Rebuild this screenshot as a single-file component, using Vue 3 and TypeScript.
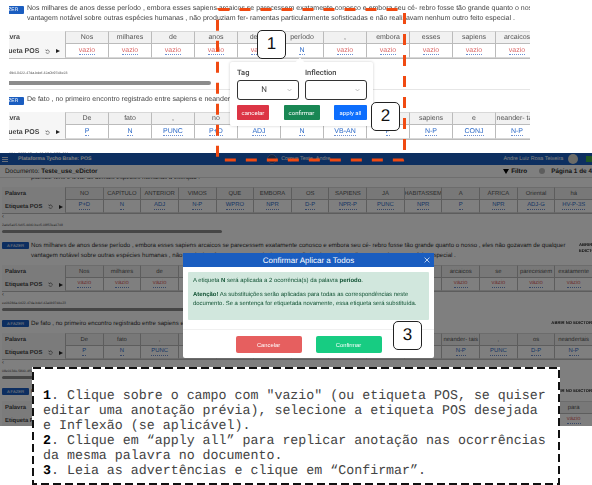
<script setup lang="ts">
interface Sentence {
  lines: string[]
  words: string[]
  tags: string[]
  uuid: string
  link?: 'wrap' | 'line'
}

const empty = (n: number) => Array.from({ length: n }, () => 'vazio')

const topRows: Sentence[] = [
  {
    lines: [
      'Nos milhares de anos desse período , embora esses sapiens arcaicos se parecessem exatamente conosco e embora seu cé- rebro fosse tão grande quanto o nosso , eles',
      'vantagem notável sobre outras espécies humanas , não produziam fer- ramentas particularmente sofisticadas e não realizavam nenhum outro feito especial .',
    ],
    words: ['Nos', 'milhares', 'de', 'anos', 'desse', 'período', ',', 'embora', 'esses', 'sapiens', 'arcaicos', 'se'],
    tags: ['vazio', 'vazio', 'vazio', 'vazio', 'vazio', 'N', 'vazio', 'vazio', 'vazio', 'vazio', 'vazio', 'vazio'],
    uuid: '5fa2c9b4-0422-47da-bdef-42a0b97d4e23',
  },
  {
    lines: ['De fato , no primeiro encontro registrado entre sapiens e neander- tais , os neandertais'],
    words: ['De', 'fato', ',', 'no', 'primeiro', 'encontro', 'registrado', 'entre', 'sapiens', 'e', 'neander- tais', ','],
    tags: ['P', 'N', 'PUNC', 'P+D', 'ADJ', 'N', 'VB-AN', 'P', 'N-P', 'CONJ', 'N-P', 'PUNC'],
    uuid: '08e013de-5800-4f5a-8a89-9f12c6f05e981',
  },
]

const lowerRows: Sentence[] = [
  {
    lines: [
      'Nos milhares de anos desse período , embora esses sapiens arcaicos se parecessem exatamente conosco e embora seu cé- rebro fosse tão grande quanto o nosso , eles não gozavam de qualquer',
      'vantagem notável sobre outras espécies humanas , não produziam fer- ramentas particularmente sofisticadas e não realizavam nenhum outro feito especial .',
    ],
    words: ['Nos', 'milhares', 'de', 'anos', 'desse', 'período', ',', 'embora', 'esses', 'sapiens', 'arcaicos', 'se', 'parecessem', 'exatamente'],
    tags: empty(14),
    uuid: 'ee0b28da-0422-47da-bdef-42a0b97d4e23',
    link: 'wrap',
  },
  {
    lines: ['De fato , no primeiro encontro registrado entre sapiens e neander- tais , os neandertais'],
    words: ['De', 'fato', ',', 'no', 'primeiro', 'encontro', 'registrado', 'entre', 'sapiens', 'e', 'neander- tais', ',', 'os', 'neandertais'],
    tags: ['P', 'N', 'PUNC', 'P+D', 'ADJ', 'N', 'VB-AN', 'P', 'N-P', 'CONJ', 'N-P', 'PUNC', 'D-P', 'N-P'],
    uuid: '08e013de-5800-4f5a-8a89-9f12c6f05e981',
    link: 'line',
  },
  {
    lines: ['Os sapiens expandiram-se'],
    words: ['Os', 'sapiens', 'se', 'expandiram', 'pelo', 'mundo', 'e', 'chegaram', 'da', 'África', 'até', 'a', 'Ásia', 'para'],
    tags: empty(14),
    uuid: '',
    link: 'line',
  },
]

const firstWords = ['NO', 'CAPÍTULO', 'ANTERIOR', 'VIMOS', 'QUE', 'EMBORA', 'OS', 'SAPIENS', 'JÁ', 'HABITASSEM', 'A', 'ÁFRICA', 'Oriental', 'há']
const firstTags = ['P+D', 'N', 'ADJ', 'N-P', 'WPRO', 'NPR', 'D-P', 'NPR-P', 'PUNC', 'NPR', 'P', 'NPR', 'ADJ-G', 'HV-P-3S']
</script>

<template>
  <div class="page">
    <!-- recorte de cima: edição de uma etiqueta -->
    <div class="top">
      <section v-for="(s, i) in topRows" :key="i" class="t-block">
        <div class="t-head">
          <span class="badge">A FAZER</span>
          <div>
            <div v-for="l in s.lines" :key="l" class="line">{{ l }}</div>
          </div>
        </div>
        <div class="grid t-grid">
          <div class="cell label">Palavra</div>
          <div v-for="(w, j) in s.words" :key="j" class="cell word">{{ w }}</div>
          <div class="cell label">
            Etiqueta POS
            <svg class="undo" viewBox="0 0 10 10"><path d="M2.5 3.2A3.4 3.4 0 1 1 1.8 6M1.2 1.2 2.4 3.5 4.8 3" fill="none" stroke="#333" stroke-width="1" /></svg>
            <span class="play"></span>
          </div>
          <div v-for="(t, j) in s.tags" :key="j" class="cell">
            <span :class="t === 'vazio' ? 'empty' : 'tag'">{{ t }}</span>
          </div>
        </div>
        <div class="t-uuid">{{ s.uuid }}</div>
        <div v-if="i === 0" class="t-bar"></div>
      </section>
    </div>

    <!-- recorte de baixo: modal de confirmação -->
    <div class="lower">
      <header class="nav">
        <svg class="burger" viewBox="0 0 6 5"><path d="M0 .5h6M0 2.5h6M0 4.5h6" stroke="#fff" stroke-width=".8" /></svg>
        <span class="brand">Plataforma Tycho Brahe: POS</span>
        <span class="corpus"><i class="globe"></i>Corpus Teste_Andre</span>
        <span class="user">Andre Luiz Rosa Teixeira</span>
        <i class="avatar"></i>
        <i class="flag"></i>
      </header>
      <div class="doc">
        <span class="doc-name">Documento: <b>Teste_use_eDictor</b></span>
        <span class="filter"><i class="funnel"></i>Filtro</span>
        <i class="dot"></i>
        <b class="pager">Página 1 de 4</b>
      </div>
      <div class="cut"><div>planície fértil e levar as demais espécies humanas à extinção .</div></div>

      <div class="grid l-grid">
        <div class="cell label">Palavra</div>
        <div v-for="w in firstWords" :key="w" class="cell word">{{ w }}</div>
        <div class="cell label">
          Etiqueta POS
          <svg class="undo" viewBox="0 0 10 10"><path d="M2.5 3.2A3.4 3.4 0 1 1 1.8 6M1.2 1.2 2.4 3.5 4.8 3" fill="none" stroke="#333" stroke-width="1" /></svg>
          <span class="play"></span>
        </div>
        <div v-for="(t, j) in firstTags" :key="j" class="cell"><span class="tag">{{ t }}</span></div>
      </div>
      <div class="meta">
        <div class="arrow">‹</div>
        <div class="uuid">2a4e5a15-fe65-4d40-bec5-08f53ea1748</div>
        <div class="bar"></div>
      </div>

      <section v-for="(s, i) in lowerRows" :key="i" class="l-block">
        <div class="l-head">
          <span class="badge l-badge">A FAZER</span>
          <div>
            <div v-for="l in s.lines" :key="l" class="l-line">{{ l }}</div>
          </div>
          <span class="open" :class="s.link">ABRIR NO EDICTOR</span>
        </div>
        <div class="grid l-grid">
          <div class="cell label">Palavra</div>
          <div v-for="(w, j) in s.words" :key="j" class="cell word">{{ w }}</div>
          <div class="cell label">
            Etiqueta POS
            <svg class="undo" viewBox="0 0 10 10"><path d="M2.5 3.2A3.4 3.4 0 1 1 1.8 6M1.2 1.2 2.4 3.5 4.8 3" fill="none" stroke="#333" stroke-width="1" /></svg>
            <span class="play"></span>
          </div>
          <div v-for="(t, j) in s.tags" :key="j" class="cell">
            <span :class="t === 'vazio' ? 'empty' : 'tag'">{{ t }}</span>
          </div>
        </div>
        <div class="meta">
          <div class="arrow">‹</div>
          <div class="uuid">{{ s.uuid }}</div>
          <div class="bar"></div>
        </div>
      </section>

      <div class="backdrop"></div>
      <div class="modal">
        <div class="m-head">
          <span>Confirmar Aplicar a Todos</span>
          <svg class="close" viewBox="0 0 10 10"><path d="M1 1l8 8M9 1l-8 8" stroke="#fff" stroke-width="1.2" /></svg>
        </div>
        <div class="m-body">
          <div class="alert">
            <p>A etiqueta <b>N</b> será aplicada a 2 ocorrência(s) da palavra <b>período</b>.</p>
            <p><b>Atenção!</b> As substituições serão aplicadas para todas as correspondências neste documento. Se a sentença for etiquetada novamente, essa etiqueta será substituída.</p>
          </div>
        </div>
        <div class="m-foot">
          <button class="m-btn cancel">Cancelar</button>
          <button class="m-btn ok">Confirmar</button>
        </div>
      </div>
    </div>

    <div class="popover">
      <i class="pop-arrow"></i>
      <div class="pop-fields">
        <label>Tag
          <span class="select">N<svg viewBox="0 0 8 5"><path d="M1 1l3 3 3-3" fill="none" stroke="#999" stroke-width="1" /></svg></span>
        </label>
        <label>Inflection
          <span class="select"><svg viewBox="0 0 8 5"><path d="M1 1l3 3 3-3" fill="none" stroke="#999" stroke-width="1" /></svg></span>
        </label>
      </div>
      <div class="pop-actions">
        <button class="p-btn red">cancelar</button>
        <button class="p-btn green">confirmar</button>
        <button class="p-btn blue">apply all</button>
      </div>
    </div>

    <svg class="marks" width="592" height="170">
      <rect x="217.5" y="9.5" width="187" height="150.5" rx="1" fill="none" stroke="#f04a12" stroke-width="3" stroke-dasharray="11 10" />
    </svg>

    <div class="step one">1</div>
    <div class="step two">2</div>
    <div class="step three">3</div>

    <div class="help">
      <svg class="help-line" width="528" height="118">
        <rect x="1" y="1" width="526" height="116" fill="none" stroke="#111" stroke-width="2" stroke-dasharray="8 4" />
      </svg>
      <p><b>1</b>. Clique sobre o campo com "vazio" (ou etiqueta POS, se quiser editar uma anotação prévia), selecione a etiqueta POS desejada e Inflexão (se aplicável).</p>
      <p><b>2</b>. Clique em “apply all” para replicar anotação nas ocorrências da mesma palavra no documento.</p>
      <p><b>3</b>. Leia as advertências e clique em “Confirmar”.</p>
    </div>
  </div>
</template>

<style scoped>
.page {
  position: relative;
  width: 592px;
  height: 485px;
  overflow: hidden;
  background: #fff;
  font-family: "Liberation Sans", Arial, sans-serif;
  color: #333;
  text-rendering: geometricPrecision;
}

/* recorte de cima */
.top {
  width: 521px;
  height: 153px;
  margin-left: 9px;
  overflow: hidden;
  filter: blur(.3px);
}

.t-block {
  padding-top: 4px;
}

.t-block:first-child {
  height: 85px;
  border-bottom: 1px solid #e6e6e6;
  box-sizing: content-box;
}

.t-block + .t-block {
  padding-top: 5px;
}

.t-head {
  display: flex;
  gap: 3px;
  margin-left: -17px;
  margin-bottom: 7px;
}

.badge {
  flex: none;
  width: 32px;
  height: 8px;
  margin-top: 2px;
  background: #1a5dc0;
  color: #fff;
  font-size: 5px;
  line-height: 8px;
  text-align: center;
  border-radius: 1px;
}

.line {
  font-size: 7px;
  line-height: 10px;
  white-space: nowrap;
  color: #444;
}

.grid {
  display: grid;
  text-align: center;
}

.t-grid {
  margin-left: -19px;
  grid-template-columns: 75px repeat(12, 43px);
  grid-template-rows: 13px 14px;
  font-size: 7px;
  border-bottom: 1px solid #bbb;
}

.cell {
  display: flex;
  align-items: center;
  justify-content: center;
  border-left: 1px solid #bbb;
  border-bottom: 1px solid #d8d8d8;
  white-space: nowrap;
  overflow: hidden;
  min-width: 0;
}

.word {
  background: #f1f1f1;
  color: #555;
  border-top: 1px solid #d8d8d8;
  border-bottom-color: #bbb;
}

.label {
  justify-content: flex-start;
  padding-left: 5px;
  border: 0;
  font-weight: 700;
  color: #444;
  background: #f6f6f6;
  gap: 6px;
}

.undo {
  flex: none;
  width: 5px;
  height: 5px;
}

.play {
  flex: none;
  width: 0;
  height: 0;
  border-left: 4px solid #222;
  border-top: 2.5px solid transparent;
  border-bottom: 2.5px solid transparent;
}

.empty {
  color: #dc6a6a;
  border-bottom: 1px dotted #6c8fd0;
  line-height: 7px;
}

.tag {
  color: #2e6bc8;
  border-bottom: 1px dotted #6c8fd0;
  line-height: 7px;
}

.t-uuid {
  margin: 12px 0 0 -8px;
  font-size: 3.6px;
  line-height: 4px;
  color: #555;
  white-space: nowrap;
}

.t-bar {
  width: 202px;
  height: 4px;
  margin-top: 6px;
  background: #8c8c8c;
  border-radius: 0 2px 2px 0;
}

/* recorte de baixo */
.lower {
  position: relative;
  width: 592px;
  height: 273px;
  overflow: hidden;
  background: #fff;
  filter: blur(.25px);
}

.nav {
  display: flex;
  align-items: center;
  height: 12px;
  background: #1b5fc1;
  color: #fff;
  font-size: 5.4px;
}

.burger {
  flex: none;
  width: 6px;
  height: 5px;
  margin-left: 2px;
}

.brand {
  margin-left: 10px;
  width: 251px;
  font-size: 5.2px;
  font-weight: 700;
}

.corpus {
  display: flex;
  align-items: center;
  gap: 4px;
  width: 238px;
}

.globe {
  flex: none;
  width: 10px;
  height: 10px;
  border-radius: 50%;
  background: #2a4a86;
  border: 1px solid #5f7fb8;
  box-sizing: border-box;
}

.user {
  width: 65px;
}

.avatar {
  flex: none;
  width: 10px;
  height: 10px;
  border-radius: 50%;
  background: #d8d8d0;
}

.flag {
  flex: none;
  width: 6px;
  height: 6px;
  margin-left: 8px;
  background: #3fae4a;
}

.doc {
  display: flex;
  align-items: center;
  height: 13px;
  padding-left: 5px;
  font-size: 6.4px;
  border-bottom: 1px solid #ddd;
  box-sizing: border-box;
  white-space: nowrap;
}

.doc-name {
  width: 510px;
}

.filter {
  display: flex;
  align-items: center;
  gap: 2px;
  font-weight: 700;
  color: #222;
}

.funnel {
  width: 0;
  height: 0;
  border-top: 5px solid #000;
  border-left: 3.5px solid transparent;
  border-right: 3.5px solid transparent;
}

.dot {
  flex: none;
  width: 6px;
  height: 6px;
  margin-left: 12px;
  border-radius: 50%;
  background: #bbb;
}

.pager {
  margin-left: 6px;
}

.cut {
  height: 9px;
  padding-left: 31px;
  overflow: hidden;
  font-size: 6.1px;
  line-height: 7px;
  color: #333;
}

.cut div {
  margin-top: -4px;
}

.l-grid {
  margin-left: 2px;
  grid-template-columns: 63px repeat(14, minmax(0, 1fr));
  grid-template-rows: 13px 13px;
  font-size: 5.9px;
  border-bottom: 1px solid #bbb;
}

.l-grid .label {
  padding-left: 3px;
}

.meta {
  height: 21px;
  padding-left: 2px;
  box-sizing: border-box;
}

.arrow {
  height: 7px;
  font-size: 6px;
  line-height: 7px;
  color: #444;
}

.uuid {
  height: 6px;
  margin-top: 2px;
  font-size: 3.4px;
  line-height: 4px;
  color: #444;
}

.bar {
  width: 220px;
  height: 3px;
  margin-top: 1px;
  background: #8c8c8c;
  border-radius: 2px;
}

.l-block {
  padding-top: 6px;
}

.l-head {
  display: flex;
  margin-bottom: 4px;
  padding-left: 2px;
  gap: 2px;
}

.l-badge {
  width: 27px;
  height: 7px;
  margin-top: 1px;
  font-size: 4.2px;
  line-height: 7px;
}

.l-line {
  font-size: 6.1px;
  line-height: 10px;
  white-space: nowrap;
  color: #333;
  width: 0;
}

.open {
  flex: none;
  position: absolute;
  right: 0;
  font-size: 4.2px;
  line-height: 6px;
  font-weight: 700;
  color: #222;
}

.open.wrap {
  right: -18px;
  width: 31px;
  margin-top: 1px;
}

.open.line {
  white-space: nowrap;
  margin-top: 1px;
}

.backdrop {
  position: absolute;
  inset: 0;
  background: rgba(0, 0, 0, .5);
}

.modal {
  position: absolute;
  left: 183px;
  top: 100px;
  width: 251px;
  height: 105px;
  display: flex;
  flex-direction: column;
  background: #fff;
  border-radius: 0 0 2px 2px;
  overflow: hidden;
  font-size: 5.95px;
}

.m-head {
  display: flex;
  align-items: center;
  justify-content: center;
  flex: none;
  position: relative;
  height: 14px;
  background: #1a5dc0;
  color: #fff;
  font-size: 8px;
}

.close {
  position: absolute;
  right: 4px;
  top: 4px;
  width: 6px;
  height: 6px;
}

.m-body {
  height: 63px;
  padding: 5px 5px 0;
  box-sizing: border-box;
  border-bottom: 1px solid #f0f0f0;
}

.alert {
  height: 48px;
  padding: 5px 5px 0;
  box-sizing: border-box;
  background: #d1e7dd;
  color: #0f5132;
  border-radius: 1px;
  line-height: 9px;
}

.alert p {
  margin: 0 0 5px;
}

.m-foot {
  display: flex;
  justify-content: center;
  gap: 14px;
  padding-top: 6px;
}

.m-btn {
  width: 66px;
  height: 17px;
  padding: 0;
  border: 0;
  border-radius: 2px;
  color: #fff;
  font: 5.8px "Liberation Sans", Arial, sans-serif;
}

.cancel {
  background: #e65f5f;
}

.ok {
  background: #17cc82;
}

/* popover da etiqueta */
.popover {
  position: absolute;
  left: 230px;
  top: 62px;
  width: 143px;
  height: 64px;
  padding: 6px 6px 0 7px;
  box-sizing: border-box;
  background: #fff;
  box-shadow: 0 0 3px rgba(0, 0, 0, .2);
  border-radius: 2px;
  font-family: Roboto, sans-serif;
  filter: blur(.25px);
}

.pop-arrow {
  position: absolute;
  left: 67px;
  top: -3px;
  width: 6px;
  height: 6px;
  background: #fff;
  transform: rotate(45deg);
}

.pop-fields {
  display: flex;
  gap: 6px;
  position: relative;
}

.pop-fields label {
  display: block;
  font-size: 7.5px;
  line-height: 10px;
  font-weight: 500;
  color: #444;
}

.select {
  display: flex;
  align-items: center;
  justify-content: center;
  position: relative;
  width: 62px;
  height: 20px;
  margin-top: 2px;
  padding-right: 8px;
  box-sizing: border-box;
  border: 1px solid #333;
  border-radius: 3px;
  font-size: 8px;
  font-weight: 400;
}

.select svg {
  position: absolute;
  right: 6px;
  top: 7px;
  width: 5px;
  height: 4px;
}

.pop-actions {
  display: flex;
  justify-content: space-between;
  margin-top: 5px;
}

.p-btn {
  height: 15px;
  padding: 0;
  border: 0;
  border-radius: 1px;
  color: #fff;
  font: 6px Roboto, sans-serif;
}

.red {
  width: 32px;
  background: #dc3545;
}

.green {
  width: 36px;
  background: #198754;
}

.blue {
  width: 33px;
  background: #0d6efd;
}

/* marcações do tutorial */
.marks {
  position: absolute;
  left: 0;
  top: 0;
}

.step {
  position: absolute;
  width: 29px;
  height: 29px;
  box-sizing: border-box;
  border: 1.5px solid #222;
  border-radius: 5px;
  background: #fff;
  color: #111;
  font-size: 17px;
  line-height: 26px;
  text-align: center;
}

.one {
  left: 257px;
  top: 30px;
}

.two {
  left: 371px;
  top: 102px;
}

.three {
  left: 393px;
  top: 321px;
}

.help {
  position: absolute;
  left: 32px;
  top: 367px;
  width: 528px;
  height: 118px;
  padding: 21px 12px 0 11px;
  box-sizing: border-box;
  background: #fff;
  font-family: "Liberation Mono", monospace;
  font-size: 13.3px;
  line-height: 15px;
  color: #444;
}

.help-line {
  position: absolute;
  left: 0;
  top: 0;
}

.help p {
  margin: 0;
}

.help b {
  color: #000;
}
</style>
